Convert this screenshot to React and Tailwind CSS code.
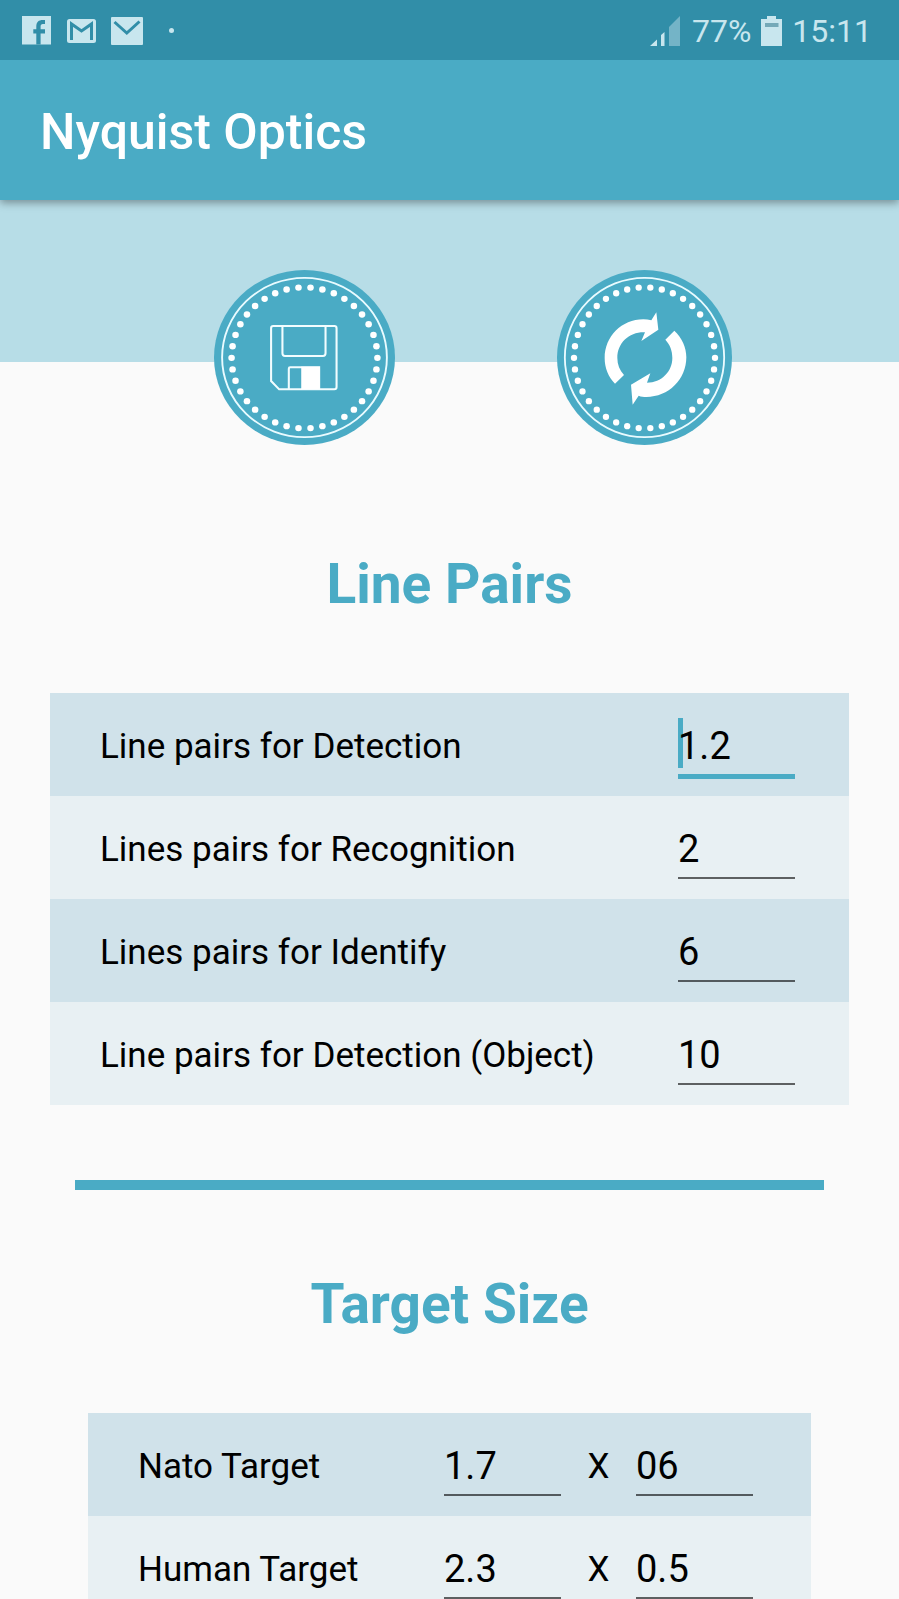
import { useState } from "react";

const DOTS = Array.from({ length: 38 }, (_, i) => {
  const a = (i / 38) * Math.PI * 2;
  return [262.5 + 211.5 * Math.cos(a), 263.5 + 211.5 * Math.sin(a)];
});

const LINE_PAIRS = [
  { id: "detection", label: "Line pairs for Detection", value: "1.2", active: true },
  { id: "recognition", label: "Lines pairs for Recognition", value: "2" },
  { id: "identify", label: "Lines pairs for Identify", value: "6" },
  { id: "object", label: "Line pairs for Detection (Object)", value: "10" },
];

const TARGETS = [
  { id: "nato", label: "Nato Target", width: "1.7", height: "06" },
  { id: "human", label: "Human Target", width: "2.3", height: "0.5" },
];

function StatusBar() {
  return (
    <div className="relative z-10 flex h-[60px] items-center justify-between bg-[#318ea8] pl-[22px] pr-[27px] pt-px text-[#c8e6ee]">
      <div className="flex items-center">
        <svg className="mr-4 h-[29px] w-[29px]" viewBox="0 0 29 29" aria-hidden="true">
          <path fill="currentColor" d="M0 0H29V28.5H0Z" />
          <path d="M14.3 28.5V17.4H11.300V13.3H14.3V10.5C14.3 6 16.800 4 20.6 4H23V8H20.900C19.200 8 18.600 9 18.600 10.5V13.3H23V17.4H18.600V28.5Z" fill="#318ea8" />
        </svg>
        <svg className="mr-[15px] h-6 w-[29px]" viewBox="0 0 29 24" aria-hidden="true">
          <rect width="29" height="24" rx="2.5" fill="currentColor" />
          <path d="M4.5 21V5L14.5 12L24.5 5V21" fill="none" stroke="#318ea8" strokeWidth="3" />
        </svg>
        <svg className="mr-[26px] h-7 w-8" viewBox="0 0 32 28" aria-hidden="true">
          <rect width="32" height="28" rx="1" fill="currentColor" />
          <path d="M3.5 5L15.8 16L28.5 4.5" fill="none" stroke="#318ea8" strokeWidth="3" />
        </svg>
        <span className="h-[5px] w-[5px] rounded-full bg-[#c8e6ee]" />
      </div>
      <div className="flex items-center">
        <svg className="mr-3 h-[30px] w-[30px]" viewBox="0 0 30 30" aria-hidden="true">
          <path d="M0 30L7 23.5V30ZM11 19L14.5 16V30H11Z" fill="currentColor" />
          <path d="M19 11L30 0V30H19Z" fill="#74b4c7" />
        </svg>
        <span className="text-[32px] leading-[38px]">77%</span>
        <svg className="mx-[10px] h-[30px] w-[21px]" viewBox="0 0 21 30" aria-hidden="true">
          <path d="M6 0H15V3H21V30H0V3H6Z" fill="currentColor" />
          <path d="M4 7H17.5V11H4Z" fill="#74a9b8" />
        </svg>
        <span className="text-[32px] leading-[38px]">15:11</span>
      </div>
    </div>
  );
}

function BadgeButton({ label, sizeClass, onClick, children }) {
  return (
    <button type="button" aria-label={label} onClick={onClick} className={sizeClass}>
      <svg className="h-full w-full" viewBox="0 0 525 525" preserveAspectRatio="none" aria-hidden="true">
        <circle cx="262.5" cy="262.5" r="262.5" fill="#4aabc5" />
        <circle cx="262.5" cy="262.5" r="239" fill="none" stroke="#e9fbff" strokeWidth="5.5" />
        {DOTS.map(([x, y], i) => (
          <circle key={i} cx={x} cy={y} r="9.5" fill="#fff" />
        ))}
        {children}
      </svg>
    </button>
  );
}

function NumberField({ id, name, defaultValue, active }) {
  return (
    <div className="relative w-[117px] shrink-0 pt-[31px]">
      {active && <span className="absolute left-0 top-[25px] h-[50px] w-[5px] bg-[#4aabc5]" />}
      <input
        id={id}
        aria-label={name}
        inputMode="decimal"
        defaultValue={defaultValue}
        className={
          "relative block w-full bg-transparent pb-[6px] text-[38px] leading-[44px] text-black outline-none " +
          (active ? "border-b-[5px] border-[#4aabc5]" : "border-b-2 border-black/60")
        }
      />
    </div>
  );
}

function Heading({ children }) {
  return <h2 className="text-center text-[55px] font-bold leading-[64px] text-[#4aabc5]">{children}</h2>;
}

const ROW = "flex h-[103px] items-start pl-[50px] odd:bg-[#d0e2ea] even:bg-[#e8f0f3]";
const LABEL = "flex-1 pt-[33px] text-[35px] leading-[41px] text-black";

export default function App() {
  const [formKey, setFormKey] = useState(0);

  return (
    <div className="h-screen overflow-hidden bg-[#fafafa] font-['Roboto',sans-serif]">
      <StatusBar />
      <header className="relative flex h-[140px] items-center bg-[#4aabc5] pl-10 pt-1 shadow-[0_3px_8px_rgba(0,0,0,0.35)]">
        <h1 className="text-[50px] font-medium leading-[58px] text-white">Nyquist Optics</h1>
      </header>

      <main>
        <div className="h-[162px] bg-[#b7dde7]" />
        <div className="-mt-[92px] flex justify-center gap-[162px] pl-[47px]">
          <BadgeButton label="Save" sizeClass="h-[175px] w-[181px]">
            <g fill="none" stroke="#f2fdff" strokeWidth="6">
              <path d="M172 168H349Q355.5 168 355.5 175V351Q355.5 358 349 358H189L165.600 333V175Q165.600 168 172 168Z" />
              <path d="M198.500 168V250Q198.500 258 206 258H316Q323.500 258 323.500 250V168" />
              <path d="M217 358V296Q217 292 221 292H305V358" />
            </g>
            <path d="M253 290H307V358H253Z" fill="#fff" />
          </BadgeButton>
          <BadgeButton label="Reset" sizeClass="h-[175px] w-[175px]" onClick={() => setFormKey((k) => k + 1)}>
            <g transform="translate(-36 -44)" fill="#fff">
              <path d="M210 385C190 365 179 338 179 308C179 244 230 192 295 192C303 192 311 193 319 195L334 171L340 223L289 257L300 231C253 229 217 262 217 308C217 328 224 345 237 359Z" />
              <path d="M388 226C411 247 424 276 424 306C424 372 371 425 304 425C296 425 288 424 281 421L263 448L258 388L316 354L306 382C350 382 382 348 382 308C382 286 375 268 361 253Z" />
            </g>
          </BadgeButton>
        </div>

        <form key={formKey}>
          <section className="mt-[107px]">
            <Heading>Line Pairs</Heading>
            <div className="mx-[50px] mt-[77px]">
              {LINE_PAIRS.map((row) => (
                <div key={row.id} className={ROW + " pr-[54px]"}>
                  <label htmlFor={row.id} className={LABEL}>
                    {row.label}
                  </label>
                  <NumberField id={row.id} defaultValue={row.value} active={row.active} />
                </div>
              ))}
            </div>
          </section>

          <hr className="mx-[75px] mt-[75px] h-[10px] border-0 bg-[#4aabc5]" />

          <section className="mt-[82px]">
            <Heading>Target Size</Heading>
            <div className="mx-[88px] mt-[77px]">
              {TARGETS.map((row) => (
                <div key={row.id} className={ROW + " pr-[58px]"}>
                  <label htmlFor={row.id} className={LABEL}>
                    {row.label}
                  </label>
                  <NumberField id={row.id} defaultValue={row.width} />
                  <span className="w-[75px] pt-[33px] text-center text-[35px] leading-[41px] text-black">X</span>
                  <NumberField id={row.id + "-height"} name={row.label + " height"} defaultValue={row.height} />
                </div>
              ))}
            </div>
          </section>
        </form>
      </main>
    </div>
  );
}
